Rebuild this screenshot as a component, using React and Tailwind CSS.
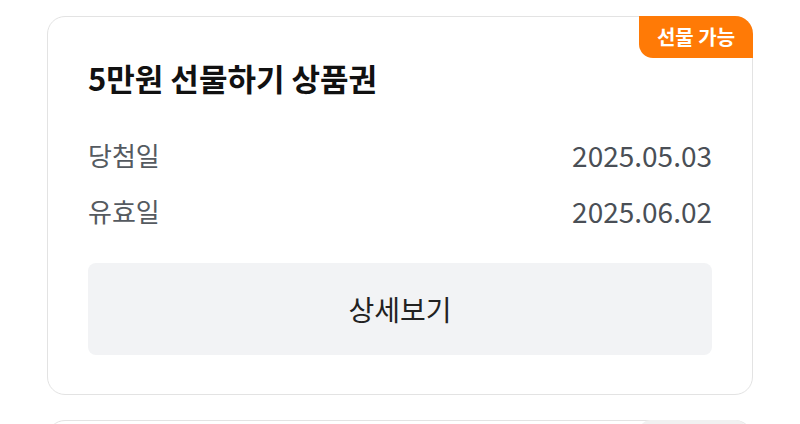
import React from 'react'

const font = { fontFamily: '"Noto Sans CJK KR", "Noto Sans", sans-serif' }

const InfoRow = ({ label, value }) => (
    <div className="flex items-center justify-between h-[36px] leading-[36px]">
        <span className="text-[26px] text-[#555a60]">{label}</span>
        <span className="text-[28px] text-[#4a4f56]">{value}</span>
    </div>
)

const App = () => {
    return (
        <div className="w-[800px] h-[424px] overflow-hidden bg-white pt-[16px] px-[47px]" style={font}>
            {/* Card */}
            <div className="relative rounded-[18px] border border-[#e3e3e3] pt-[46px] pb-[39px] px-[40px]">
                <div className="absolute -top-px -right-px h-[42px] w-[114px] flex items-center justify-center bg-[#ff7a06] rounded-tr-[18px] rounded-bl-[14px]">
                    <span className="text-[20px] leading-[42px] font-bold text-white">선물 가능</span>
                </div>

                <h2 className="text-[31px] leading-[30px] font-bold text-[#111111]">
                    5만원 선물하기 상품권
                </h2>

                <div className="mt-[44px] flex flex-col gap-[20px]">
                    <InfoRow label="당첨일" value="2025.05.03" />
                    <InfoRow label="유효일" value="2025.06.02" />
                </div>

                <button className="mt-[34px] w-full h-[92px] rounded-[8px] bg-[#f2f3f5] text-[28px] text-[#222222]">
                    상세보기
                </button>
            </div>

            {/* Next card (cut off) */}
            <div className="relative mt-[25px] h-[80px] rounded-[18px] border border-[#e3e3e3]">
                <div className="absolute -top-px right-[6px] h-[42px] w-[106px] bg-[#f1f1f1] rounded-t-[10px]"></div>
            </div>
        </div>
    )
}

export default App
